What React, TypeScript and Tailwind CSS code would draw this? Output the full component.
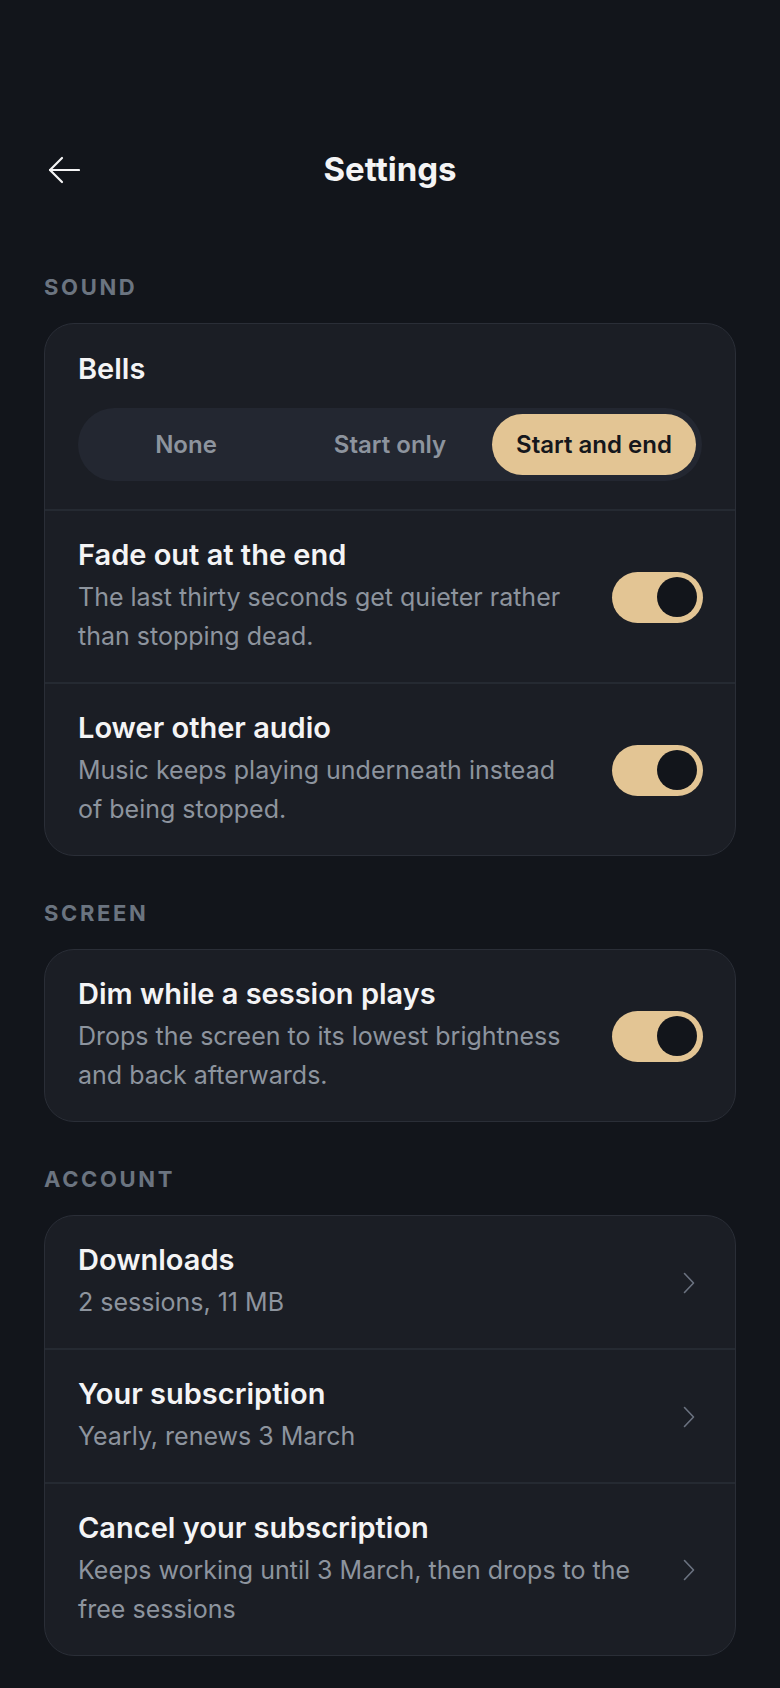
import { useState } from 'react'

type Bells = 'none' | 'start' | 'both'

const BELL_OPTIONS: { key: Bells; label: string }[] = [
  { key: 'none', label: 'None' },
  { key: 'start', label: 'Start only' },
  { key: 'both', label: 'Start and end' },
]

function BackArrow() {
  return (
    <svg width="32" height="28" viewBox="0 0 32 28" fill="none" stroke="currentColor" strokeWidth="2.2" strokeLinecap="round" strokeLinejoin="round">
      <path d="M31 14H2" />
      <path d="M14 2 2 14l12 12" />
    </svg>
  )
}

function Chevron() {
  return (
    <svg width="12" height="22" viewBox="0 0 12 22" fill="none" stroke="currentColor" strokeWidth="1.6" strokeLinecap="round" strokeLinejoin="round">
      <path d="M1.5 1.5 10.5 11l-9 9.5" />
    </svg>
  )
}

function Toggle({ on, onChange }: { on: boolean; onChange: () => void }) {
  return (
    <button
      onClick={onChange}
      className={`shrink-0 w-[91px] h-[51px] rounded-full flex items-center px-[6px] ${on ? 'bg-[#e3c594] justify-end' : 'bg-[#2a2f38] justify-start'}`}
    >
      <span className="block w-[40px] h-[40px] rounded-full bg-[#12151b]" />
    </button>
  )
}

function SectionLabel({ children }: { children: string }) {
  return <div className="text-[22px] leading-[28px] font-bold tracking-[0.12em] text-[#6b7480] mb-[22px]">{children}</div>
}

function ToggleRow({ title, desc, on, onChange, border }: { title: string; desc: string; on: boolean; onChange: () => void; border?: boolean }) {
  return (
    <div className={`flex items-center gap-8 pl-[33px] pr-[32px] pt-[27px] pb-[26px] ${border ? 'border-t-2 border-[#252a32]' : ''}`}>
      <div className="flex-1 min-w-0">
        <div className="text-[29px] leading-[34px] font-semibold text-[#f4f4f5]">{title}</div>
        <div className="mt-[6px] text-[25px] leading-[39px] text-[#8d949e]">{desc}</div>
      </div>
      <Toggle on={on} onChange={onChange} />
    </div>
  )
}

function LinkRow({ title, desc, border }: { title: string; desc: string; border?: boolean }) {
  return (
    <div className={`flex items-center gap-8 pl-[33px] pr-[40px] pt-[27px] pb-[26px] ${border ? 'border-t-2 border-[#252a32]' : ''}`}>
      <div className="flex-1 min-w-0">
        <div className="text-[29px] leading-[34px] font-semibold text-[#f4f4f5]">{title}</div>
        <div className="mt-[6px] text-[25px] leading-[39px] text-[#8d949e]">{desc}</div>
      </div>
      <span className="text-[#6b7280]">
        <Chevron />
      </span>
    </div>
  )
}

export default function App() {
  const [bells, setBells] = useState<Bells>('both')
  const [fade, setFade] = useState(true)
  const [duck, setDuck] = useState(true)
  const [dim, setDim] = useState(true)

  return (
    <div className="min-h-screen bg-[#12151b] px-[44px] pb-10 font-['Inter',sans-serif]">
      <header className="grid grid-cols-[1fr_auto_1fr] items-center h-16 pt-[138px] box-content">
        <button className="justify-self-start ml-[4px] text-[#f4f4f5]">
          <BackArrow />
        </button>
        <h1 className="text-[33px] font-bold text-[#f4f4f5]">Settings</h1>
        <div />
      </header>

      <section className="mt-[71px]">
        <SectionLabel>SOUND</SectionLabel>
        <div className="rounded-[30px] border border-[#2a2e37] bg-[#1b1e25]">
          <div className="pl-[33px] pr-[33px] pt-[28px] pb-[28px]">
            <div className="text-[29px] leading-[34px] font-semibold text-[#f4f4f5]">Bells</div>
            <div className="mt-[22px] grid grid-cols-3 rounded-full bg-[#232731] p-[6px]">
              {BELL_OPTIONS.map((opt) => (
                <button
                  key={opt.key}
                  onClick={() => setBells(opt.key)}
                  className={`h-[61px] rounded-full text-[24px] font-semibold ${bells === opt.key ? 'bg-[#e3c594] text-[#15171c]' : 'text-[#8d949e]'}`}
                >
                  {opt.label}
                </button>
              ))}
            </div>
          </div>
          <ToggleRow
            border
            title="Fade out at the end"
            desc="The last thirty seconds get quieter rather than stopping dead."
            on={fade}
            onChange={() => setFade(!fade)}
          />
          <ToggleRow
            border
            title="Lower other audio"
            desc="Music keeps playing underneath instead of being stopped."
            on={duck}
            onChange={() => setDuck(!duck)}
          />
        </div>
      </section>

      <section className="mt-[43px]">
        <SectionLabel>SCREEN</SectionLabel>
        <div className="rounded-[30px] border border-[#2a2e37] bg-[#1b1e25]">
          <ToggleRow
            title="Dim while a session plays"
            desc="Drops the screen to its lowest brightness and back afterwards."
            on={dim}
            onChange={() => setDim(!dim)}
          />
        </div>
      </section>

      <section className="mt-[43px]">
        <SectionLabel>ACCOUNT</SectionLabel>
        <div className="rounded-[30px] border border-[#2a2e37] bg-[#1b1e25]">
          <LinkRow title="Downloads" desc="2 sessions, 11 MB" />
          <LinkRow border title="Your subscription" desc="Yearly, renews 3 March" />
          <LinkRow border title="Cancel your subscription" desc="Keeps working until 3 March, then drops to the free sessions" />
        </div>
      </section>
    </div>
  )
}
